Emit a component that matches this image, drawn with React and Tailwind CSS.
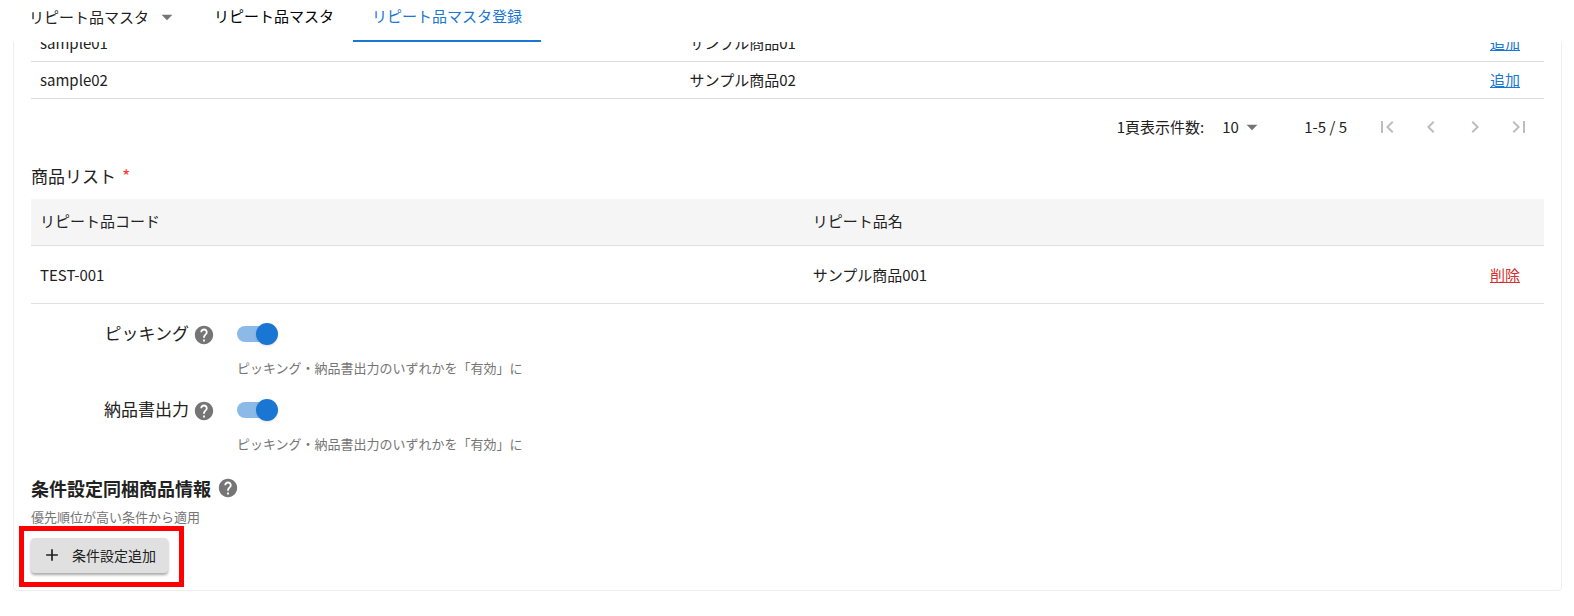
import { useState } from 'react';
import {
  MdAdd,
  MdArrowDropDown,
  MdChevronLeft,
  MdChevronRight,
  MdFirstPage,
  MdHelp,
  MdLastPage,
} from 'react-icons/md';

const tabs = ['リピート品マスタ', 'リピート品マスタ登録'];

const candidates = [
  { code: 'sample01', name: 'サンプル商品01' },
  { code: 'sample02', name: 'サンプル商品02' },
];

const products = [{ code: 'TEST-001', name: 'サンプル商品001' }];

function TabBar({ active, onChange }) {
  return (
    <header className="flex h-[42px] bg-white">
      <div className="relative flex h-[34px] w-[195px] items-center pl-[29px]">
        <select
          aria-label="メニュー"
          className="w-full cursor-pointer appearance-none bg-transparent text-[#212121]"
        >
          <option>リピート品マスタ</option>
        </select>
        <MdArrowDropDown className="pointer-events-none absolute right-[15px] text-[26px] text-[#757575]" />
      </div>
      <div role="tablist" className="flex">
        {tabs.map((label, index) => (
          <button
            key={label}
            type="button"
            role="tab"
            aria-selected={active === index}
            onClick={() => onChange(index)}
            className={`cursor-pointer border-b-2 px-[19px] pb-2 ${
              active === index ? 'border-[#1976d2] text-[#1976d2]' : 'border-transparent text-black'
            }`}
          >
            {label}
          </button>
        ))}
      </div>
    </header>
  );
}

function Pagination() {
  const buttons = [
    { label: '最初の頁', Icon: MdFirstPage },
    { label: '前の頁', Icon: MdChevronLeft },
    { label: '次の頁', Icon: MdChevronRight },
    { label: '最後の頁', Icon: MdLastPage },
  ];

  return (
    <div className="flex h-14 items-center justify-end pr-[3px]">
      <label htmlFor="page-size">1頁表示件数:</label>
      <div className="relative ml-[18px] flex w-10 items-center">
        <select id="page-size" className="w-full cursor-pointer appearance-none bg-transparent">
          <option>10</option>
        </select>
        <MdArrowDropDown className="pointer-events-none absolute -right-[3px] text-[26px] text-[#757575]" />
      </div>
      <span className="mr-[18px] ml-[42px]">1-5 / 5</span>
      {buttons.map(({ label, Icon }) => (
        <button
          key={label}
          type="button"
          disabled
          aria-label={label}
          className="flex h-11 w-11 items-center justify-center text-2xl text-[#bdbdbd]"
        >
          <Icon />
        </button>
      ))}
    </div>
  );
}

function SwitchField({ id, label }) {
  const [checked, setChecked] = useState(true);

  return (
    <div className="flex h-[76px]">
      <div className="flex w-[206px] items-start justify-end pr-[22px]">
        <label htmlFor={id} className="mt-4 text-[17px] leading-[26px]">
          {label}
        </label>
        <MdHelp className="mt-5 ml-1 text-[22px] text-[#757575]" />
      </div>
      <div className="pt-[22px]">
        <input
          id={id}
          type="checkbox"
          role="switch"
          checked={checked}
          onChange={(e) => setChecked(e.target.checked)}
          className="relative block h-4 w-[38px] cursor-pointer appearance-none rounded-full bg-[#bdbdbd] before:absolute before:-top-[3px] before:-left-[3px] before:h-[22px] before:w-[22px] before:rounded-full before:bg-white before:shadow checked:bg-[#8cbae8] checked:before:left-[19px] checked:before:bg-[#1976d2]"
        />
        <p className="mt-4 text-[13px] leading-5 text-[#757575]">
          ピッキング・納品書出力のいずれかを「有効」に
        </p>
      </div>
    </div>
  );
}

function App() {
  const [activeTab, setActiveTab] = useState(1);

  return (
    <div className="bg-white font-['Noto_Sans_CJK_JP',sans-serif] text-[15px] leading-[22px] text-[#212121]">
      <TabBar active={activeTab} onChange={setActiveTab} />

      <main className="overflow-hidden pr-3 pl-[13px]">
        <div className="-mt-[17px] rounded border border-[#eeeeee] px-[17px] pb-[17px]">
          {/* Candidates */}
          <table className="w-full table-fixed">
            <colgroup>
              <col className="w-[43%]" />
              <col />
              <col className="w-16" />
            </colgroup>
            <tbody>
              {candidates.map((row) => (
                <tr key={row.code} className="h-[37px] border-b border-[#dadce0] first:h-[35px]">
                  <td className="pl-[9px]">{row.code}</td>
                  <td className="pl-2">{row.name}</td>
                  <td className="pl-[10px]">
                    <a href="#add" className="text-[#1976d2] underline">追加</a>
                  </td>
                </tr>
              ))}
            </tbody>
          </table>
          <Pagination />

          {/* Selected products */}
          <h2 className="mt-[7px] mb-[10px] text-[17px] leading-[26px]">
            商品リスト<span className="ml-[6px] text-lg leading-[26px] text-[#f44336]">*</span>
          </h2>
          <table className="w-full table-fixed">
            <colgroup>
              <col className="w-[51%]" />
              <col />
              <col className="w-16" />
            </colgroup>
            <thead>
              <tr className="h-[47px] border-b border-[#e0e0e0] bg-[#f5f5f5] text-left">
                <th className="pb-[2px] pl-[9px] font-normal">リピート品コード</th>
                <th className="pb-[2px] pl-[10px] font-normal">リピート品名</th>
                <th aria-label="操作" />
              </tr>
            </thead>
            <tbody>
              {products.map((row) => (
                <tr key={row.code} className="h-[58px] border-b border-[#e0e0e0]">
                  <td className="pl-[9px]">{row.code}</td>
                  <td className="pl-[10px]">{row.name}</td>
                  <td className="pl-[10px]">
                    <a href="#delete" className="text-[#d32f2f] underline">削除</a>
                  </td>
                </tr>
              ))}
            </tbody>
          </table>

          <SwitchField id="picking" label="ピッキング" />
          <SwitchField id="delivery-note" label="納品書出力" />

          {/* Conditions */}
          <div className="mt-[19px] flex items-center gap-[6px]">
            <h2 className="text-lg leading-[26px] font-bold">条件設定同梱商品情報</h2>
            <MdHelp className="text-[22px] text-[#757575]" />
          </div>
          <p className="mt-[6px] text-[13px] leading-5 text-[#757575]">優先順位が高い条件から適用</p>
          <div className="relative mt-[11px] w-fit">
            <button
              type="button"
              className="flex h-[35px] cursor-pointer items-center gap-[10px] rounded bg-[#e0e0e0] pr-3 pb-[2px] pl-[11px] text-sm shadow-[0_2px_3px_rgba(0,0,0,0.35)]"
            >
              <MdAdd className="text-[20px]" />
              条件設定追加
            </button>
            <div className="pointer-events-none absolute -top-3 -right-4 -bottom-[14px] -left-3 border-5 border-[#ff0000]" />
          </div>
        </div>
      </main>
    </div>
  );
}

export default App;
